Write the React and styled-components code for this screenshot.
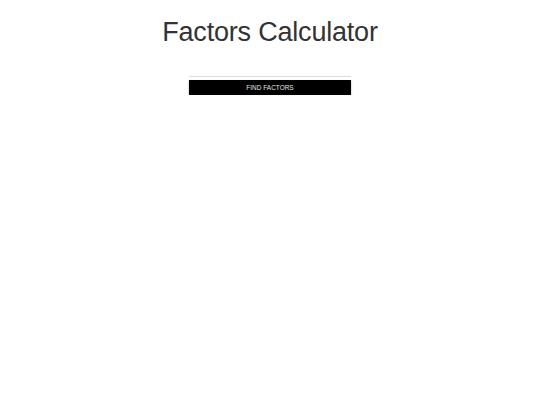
import React, { useState } from 'react';
import styled, { createGlobalStyle } from 'styled-components';

const GlobalStyle = createGlobalStyle`
  body {
    margin: 0;
    background: #fff;
    font-family: "Liberation Sans", Arial, sans-serif;
  }
`;

const Page = styled.main`
  display: flex;
  flex-direction: column;
  align-items: center;
  padding-top: 17px;
`;

const Title = styled.h1`
  margin: 0;
  font-size: 27px;
  font-weight: 400;
  line-height: 31px;
  color: #333;
  letter-spacing: -0.2px;
`;

const Form = styled.form`
  display: flex;
  flex-direction: column;
  width: 162px;
  margin-top: 28px;
  gap: 3px;
`;

const NumberInput = styled.input`
  height: 0;
  padding: 0;
  border: 0;
  border-bottom: 1px solid #dcdcdc;
  outline: none;
  background: transparent;
`;

const Button = styled.button`
  height: 15px;
  padding: 0;
  border: 0;
  background: #000;
  color: #e8e8e8;
  font-family: "Liberation Sans", Arial, sans-serif;
  font-size: 6.4px;
  letter-spacing: 0.05px;
  text-transform: uppercase;
  box-shadow: 0 1px 2px rgba(0, 0, 0, 0.3);
  cursor: pointer;
`;

export default function App() {
  const [value, setValue] = useState('');
  return (
    <>
      <GlobalStyle />
      <Page>
        <Title>Factors Calculator</Title>
        <Form onSubmit={e => e.preventDefault()}>
          <NumberInput
            type="number"
            value={value}
            onChange={e => setValue(e.target.value)}
          />
          <Button type="submit">Find Factors</Button>
        </Form>
      </Page>
    </>
  );
}
